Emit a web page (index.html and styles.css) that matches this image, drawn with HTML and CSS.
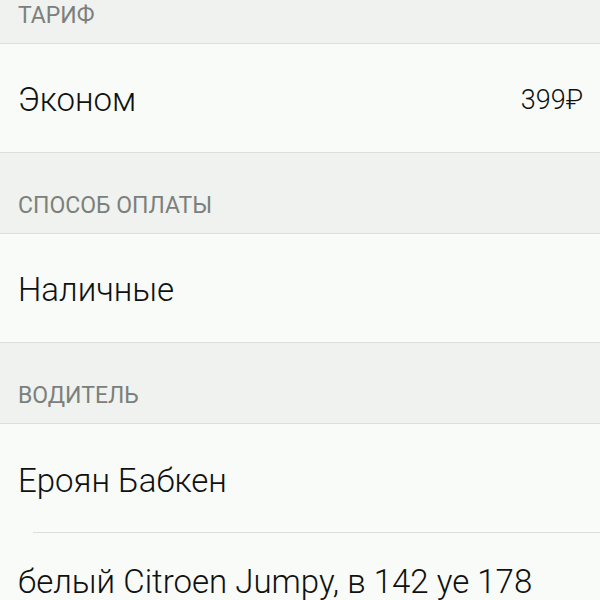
FILE: index.html
```html
<!DOCTYPE html>
<html lang="ru">
<head>
<meta charset="UTF-8">
<title>Заказ</title>
<link rel="stylesheet" href="styles.css">
</head>
<body>
<div class="screen">
    <div class="sec">ТАРИФ</div>
    <div class="row">
        <span class="label">Эконом</span>
        <span class="price">399₽</span>
    </div>
    <div class="sec">СПОСОБ ОПЛАТЫ</div>
    <div class="row">
        <span class="label">Наличные</span>
    </div>
    <div class="sec">ВОДИТЕЛЬ</div>
    <div class="row row-inset">
        <span class="label">Ероян Бабкен</span>
    </div>
    <div class="row row-car">
        <span class="label">белый Citroen Jumpy, в 142 ye 178</span>
    </div>
</div>
</body>
</html>
```

FILE: styles.css
```css
*{margin:0;padding:0;box-sizing:border-box;}
html,body{background:#f8fbf7;}
body{font-family:Roboto,"Noto Sans",sans-serif;width:600px;height:600px;overflow:hidden;}
.screen{margin-top:-37px;}
.sec{height:81px;background:#eff2ee;border-bottom:1px solid #dcdfdb;display:flex;align-items:flex-end;padding:0 18px 14px;font-size:23px;line-height:26px;color:#7c807c;}
.row{height:109px;background:#f8fbf7;border-bottom:1px solid #dcdfdb;display:flex;align-items:center;justify-content:space-between;padding:4px 17px 0 18px;color:#0f110f;}
.label{font-size:33px;line-height:38px;font-weight:300;}
.price{font-size:27px;line-height:32px;font-weight:300;}
.row-inset{border-bottom:none;position:relative;}
.row-inset:after{content:'';position:absolute;left:33px;right:0;bottom:0;height:1px;background:#dcdfdb;}
.row-car{border-bottom:none;align-items:flex-start;padding-top:30px;}
.row-car .label{white-space:nowrap;}
```
